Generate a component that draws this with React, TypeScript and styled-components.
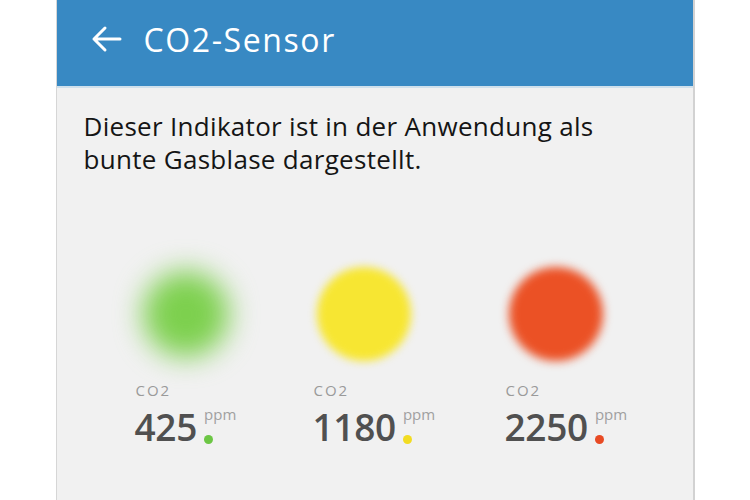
import styled, { createGlobalStyle } from 'styled-components'

const GlobalStyle = createGlobalStyle`
  html, body {
    margin: 0;
    padding: 0;
    background: #fff;
    font-family: "Open Sans", "Noto Sans", sans-serif;
  }
`

const readings = [
  { value: 425, color: '#7dd04e', dot: '#6cc644', blur: 14, size: 86 },
  { value: 1180, color: '#f7e632', dot: '#f2dc22', blur: 4, size: 94 },
  { value: 2250, color: '#eb5125', dot: '#e84a24', blur: 5, size: 94 },
]

const App = () => {
  return (
    <>
      <GlobalStyle />
      <Page>
        <Screen>
          <Header>
            <svg width="32" height="28" viewBox="0 0 32 28" fill="none">
              <path
                d="M30 14H4M15 3L4 14l11 11"
                stroke="#fff"
                strokeWidth="3"
                strokeLinecap="round"
                strokeLinejoin="round"
              />
            </svg>
            <Title>CO2-Sensor</Title>
          </Header>
          <Intro>
            Dieser Indikator ist in der Anwendung als
            <br />
            bunte Gasblase dargestellt.
          </Intro>
          <Readings>
            {readings.map(r => (
              <Reading key={r.value}>
                <BubbleSlot>
                  <Bubble color={r.color} blur={r.blur} size={r.size} />
                </BubbleSlot>
                <Label>CO2</Label>
                <ValueRow>
                  <Value>{r.value}</Value>
                  <Unit>
                    <span>ppm</span>
                    <Dot color={r.dot} />
                  </Unit>
                </ValueRow>
              </Reading>
            ))}
          </Readings>
        </Screen>
      </Page>
    </>
  )
}

const Page = styled.div`
  width: 750px;
  height: 500px;
  overflow: hidden;
  display: flex;
  justify-content: center;
  background: #fff;
`

const Screen = styled.div`
  width: 636px;
  height: 500px;
  background: #f1f1f1;
  border-left: 1px solid #d6d6d6;
  border-right: 2px solid #d2d2d2;
  display: flex;
  flex-direction: column;
`

const Header = styled.div`
  height: 88px;
  flex-shrink: 0;
  background: #3889c3;
  border-bottom: 2px solid #cfe0ec;
  display: flex;
  align-items: center;
  padding-left: 33px;
  gap: 22px;
  box-sizing: border-box;
  padding-bottom: 8px;
`

const Title = styled.h1`
  margin: 0;
  color: #fff;
  font-weight: 400;
  font-size: 32px;
  letter-spacing: 1.6px;
`

const Intro = styled.p`
  margin: 22px 0 0 27px;
  font-size: 26px;
  line-height: 33px;
  letter-spacing: 0.3px;
  color: #151515;
`

const Readings = styled.div`
  display: grid;
  grid-template-columns: 178px 192px 150px;
  padding-left: 78px;
  margin-top: 86px;
`

const Reading = styled.div`
  display: flex;
  flex-direction: column;
`

const BubbleSlot = styled.div`
  width: 102px;
  height: 104px;
  display: flex;
  align-items: center;
  justify-content: center;
`

const Bubble = styled.div<{ color: string; blur: number; size: number }>`
  width: ${p => p.size}px;
  height: ${p => p.size}px;
  border-radius: 50%;
  background: ${p => p.color};
  filter: blur(${p => p.blur}px);
`

const Label = styled.div`
  margin-top: 14px;
  font-size: 15px;
  letter-spacing: 2px;
  color: #9a9a9a;
  padding-left: 1px;
`

const ValueRow = styled.div`
  display: flex;
  align-items: flex-start;
  margin-top: 3px;
`

const Value = styled.span`
  font-size: 37px;
  font-weight: 600;
  color: #505050;
  letter-spacing: -0.3px;
  line-height: 48px;
`

const Unit = styled.span`
  display: flex;
  flex-direction: column;
  align-items: flex-start;
  margin-left: 7px;
  font-size: 15px;
  color: #a0a0a0;
  line-height: 15px;
  padding-top: 4px;
`

const Dot = styled.span<{ color: string }>`
  width: 9px;
  height: 9px;
  border-radius: 50%;
  background: ${p => p.color};
  margin-top: 13px;
`

export default App
